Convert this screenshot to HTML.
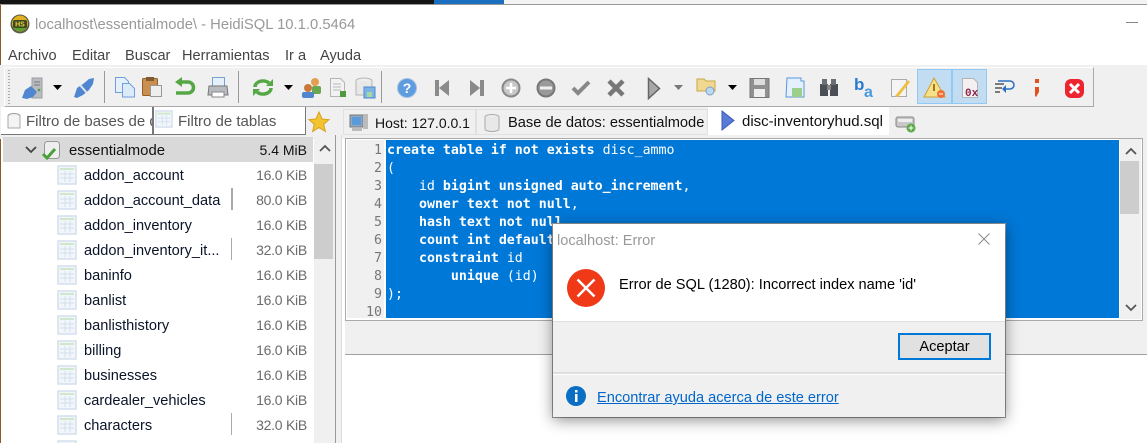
<!DOCTYPE html>
<html><head><meta charset="utf-8"><style>
html,body{margin:0;padding:0;width:1147px;height:443px;overflow:hidden;background:#fff}
body{position:relative;font-family:"Liberation Sans",sans-serif;font-size:14.6px;color:#000}
.a{position:absolute}
.t{position:absolute;white-space:nowrap;line-height:20px;margin-top:1px}
svg{position:absolute;overflow:visible}
.r{position:absolute;left:84px;white-space:nowrap;line-height:20px;color:#0a1428;font-size:14.6px;margin-top:1px}
.s{position:absolute;right:840px;white-space:nowrap;line-height:20px;color:#6b6b6b;font-size:14px;letter-spacing:-.25px}
.b{position:absolute;left:231px;width:1px;height:22px;background:#aaa}
.c{position:absolute;left:387px;white-space:pre;font:13.28px/18px "DejaVu Sans Mono","Liberation Mono",monospace;color:#fff}
.c b{font-weight:bold}
.n{position:absolute;left:346px;width:36px;text-align:right;font:13.28px/18px "DejaVu Sans Mono","Liberation Mono",monospace;color:#777}
.m{position:absolute;white-space:nowrap;line-height:20px;color:#666;margin-top:1px}
</style></head><body>

<svg width="0" height="0" style="position:absolute"><defs>
<symbol id="tb" viewBox="0 0 20 20"><rect x="1" y="1" width="18" height="18" fill="#f2f6fb" stroke="#d3dfee" stroke-width="1.500"/><rect x="3" y="3" width="14" height="2" fill="#cfe8cc"/><path d="M3 9h14M3 13h14M8 6v11M13 6v11" stroke="#d3dfee" fill="none"/></symbol>
</defs></svg>

<!-- top strip -->
<div class="a" style="left:0;top:0;width:434px;height:4px;background:#141414"></div>
<div class="a" style="left:434px;top:0;width:70px;height:4px;background:#1a6fc0"></div>
<div class="a" style="left:504px;top:0;width:643px;height:4px;background:#f3f3f3"></div>
<div class="a" style="left:0;top:4px;width:1147px;height:1px;background:#999"></div>
<div class="a" style="left:0;top:5px;width:1px;height:438px;background:#8a5a2a"></div>

<!-- title -->
<svg style="left:10px;top:14px" width="20" height="20"><circle cx="10" cy="10" r="9.500" fill="#5a5a4a"/><circle cx="10" cy="9.500" r="8" fill="#e0b020"/><path d="M2.500 12a8 8 0 0 0 15 0z" fill="#5aa02c"/><rect x="3" y="6" width="14" height="8" rx="2" fill="#3a4a20"/><text x="10" y="12.500" font-size="7" font-weight="bold" text-anchor="middle" fill="#f0d040" font-family="Liberation Sans">HS</text></svg>
<div class="t" style="left:35px;top:14px;color:#999;font-size:14.8px">localhost\essentialmode\ - HeidiSQL 10.1.0.5464</div>
<div class="a" style="left:1126px;top:22px;width:12px;height:1px;background:#888"></div>

<!-- menu -->
<div class="t" style="left:8px;top:45px;color:#444">Archivo</div>
<div class="t" style="left:72px;top:45px;color:#444">Editar</div>
<div class="t" style="left:125px;top:45px;color:#444">Buscar</div>
<div class="t" style="left:182px;top:45px;color:#444">Herramientas</div>
<div class="t" style="left:285px;top:45px;color:#444">Ir a</div>
<div class="t" style="left:320px;top:45px;color:#444">Ayuda</div>

<!-- band -->
<div class="a" style="left:0;top:65px;width:1147px;height:74px;background:#f0f0f0"></div>

<!-- toolbar -->
<div class="a" style="left:4px;top:67px;width:1088px;height:38px;background:#f0f0f0;border:1px solid #fff;border-right:1px solid #aaa;border-bottom:1px solid #aaa"></div>
<div class="a" style="left:8px;top:70px;width:2px;height:34px;background:repeating-linear-gradient(#aaa 0 1px,transparent 1px 3px)"></div>
<div class="a" style="left:104px;top:71px;width:1px;height:32px;background:#999"></div>
<div class="a" style="left:238px;top:71px;width:1px;height:32px;background:#999"></div>
<div class="a" style="left:381px;top:71px;width:1px;height:32px;background:#999"></div>
<div class="a" style="left:917px;top:69px;width:33px;height:33px;background:#c2dcf2;border:1px solid #90c8f6"></div>
<div class="a" style="left:952px;top:69px;width:33px;height:33px;background:#c2dcf2;border:1px solid #90c8f6"></div>

<svg class="i" style="left:0;top:0" width="1147" height="135">
<!-- connection -->
<rect x="32" y="78" width="10" height="20" fill="#b8bcc0" stroke="#9a9ea2"/><path d="M34 82h6M34 85h6" stroke="#777"/><circle cx="39" cy="90" r="1.300" fill="#4aa03a"/>
<path d="M22 98l3-8 6-4 6 6-4 5-6 2z" fill="#4f86cf"/>
<path d="M53 85h9l-4.500 5z" fill="#000"/>
<path d="M74 97l3-9 6-4 6-5 5-1-1 6-4 6-6 5-6 3z" fill="#4f86cf"/><path d="M80 85l7 8" stroke="#dfe6ee" stroke-width="2"/>
<!-- copy -->
<path d="M115.500 77.500h9l4 4v11h-13z" fill="#e6f0fb" stroke="#6f9fdc"/><path d="M122.500 83.500h7l5 5v8.500h-12z" fill="#dcebfa" stroke="#6f9fdc"/>
<!-- paste -->
<rect x="142.500" y="78.500" width="15" height="17" rx="1" fill="#c98f4f" stroke="#96602c"/><rect x="146" y="77" width="8" height="4" fill="#7f5a30"/><rect x="150.500" y="85.500" width="11" height="11" fill="#eee" stroke="#999"/>
<!-- undo -->
<path d="M179 82h9a5 5 0 0 1 0 11h-12" fill="none" stroke="#55a745" stroke-width="3.500"/><path d="M182 77l-7 5 7 5z" fill="#55a745"/>
<!-- print -->
<rect x="212.500" y="77.500" width="12" height="9" fill="#e6f0fb" stroke="#7aa0d0"/><path d="M209 86h18l1 9h-20z" fill="#b8bcc0" stroke="#777"/><rect x="212" y="92" width="12" height="5" fill="#fff" stroke="#888"/>
<!-- refresh -->
<path d="M255 87a8 6 0 0 1 14-4" fill="none" stroke="#55a745" stroke-width="3.500"/><path d="M271 88a8 6 0 0 1-14 4" fill="none" stroke="#55a745" stroke-width="3.500"/><path d="M273 79v7h-7zM253 96v-7h7z" fill="#55a745"/>
<path d="M284 85h9l-4.500 5z" fill="#000"/>
<!-- users -->
<circle cx="315" cy="82" r="4" fill="#e0a050"/><rect x="312" y="86" width="9" height="8" rx="2" fill="#6aa84f"/><circle cx="308" cy="88" r="4" fill="#c87838"/><rect x="302" y="92" width="12" height="6" rx="2" fill="#4f86cf"/>
<!-- doc -->
<path d="M330.500 78.500h10l4 4v14h-14z" fill="#f2f2f2" stroke="#b5b5b5"/><path d="M333 84h8M333 87h8M333 90h8" stroke="#bbb"/><rect x="340" y="91" width="6" height="6" fill="#4f9a3f"/>
<!-- db save -->
<ellipse cx="364" cy="81" rx="8" ry="3" fill="#eee" stroke="#b5b5b5"/><path d="M356 81v14h16v-14" fill="#e8e8e8" stroke="#b5b5b5"/><rect x="364" y="87" width="11" height="11" fill="#7db4e8" stroke="#5088c8"/><rect x="367" y="92" width="5" height="5" fill="#a8d8a0"/>
<!-- help -->
<circle cx="407" cy="88" r="9.500" fill="#5e9ce0" stroke="#a9c4e4"/><text x="407" y="93" font-size="14" font-weight="bold" fill="#fff" text-anchor="middle" font-family="Liberation Sans">?</text>
<!-- nav -->
<path d="M435 80h4v16h-4zM449 80v16l-10-8z" fill="#8a8a8a"/>
<path d="M484 80h-4v16h4zM470 80v16l10-8z" fill="#8a8a8a"/>
<circle cx="511" cy="88" r="8.500" fill="#c8c8c8" stroke="#888" stroke-width="2"/><path d="M506 88h10M511 83v10" stroke="#fff" stroke-width="2.500"/>
<circle cx="546" cy="88" r="8.500" fill="#999" stroke="#777" stroke-width="2"/><path d="M540 88h12" stroke="#eee" stroke-width="3"/>
<path d="M573 88l5 5 11-11" fill="none" stroke="#888" stroke-width="4"/>
<path d="M609 81l14 14M623 81l-14 14" stroke="#777" stroke-width="4.500"/>
<path d="M648.500 78.500l11 10-11 10z" fill="#a8a8a8" stroke="#666" stroke-width="1.500"/>
<path d="M674 85h9l-4.500 5z" fill="#777"/>
<path d="M697 79h7l2 2h9v10h-18z" fill="#f0d890" stroke="#c8a848"/><circle cx="710" cy="91" r="4" fill="#bcd8f0" stroke="#7aa0c8"/>
<path d="M728 85h9l-4.500 5z" fill="#000"/>
<!-- save grey -->
<rect x="750" y="78.500" width="19" height="19" fill="#909090" stroke="#777"/><rect x="754" y="79" width="11" height="6" fill="#ddd"/><rect x="754" y="89" width="11" height="8" fill="#eee"/>
<!-- sql save -->
<path d="M787 78h14v3h3v16h-18z" fill="#e4f0fb" stroke="#5a96dc"/><rect x="792" y="88" width="10" height="9" fill="#9ccf8c"/>
<!-- binoculars -->
<rect x="820" y="84" width="8" height="12" fill="#4a4f55"/><rect x="830" y="84" width="8" height="12" fill="#4a4f55"/><rect x="822" y="79" width="5" height="6" fill="#6a6f75"/><rect x="831" y="79" width="5" height="6" fill="#6a6f75"/><rect x="827" y="85" width="4" height="5" fill="#888"/>
<!-- replace -->
<text x="854" y="90" font-size="17" font-weight="bold" fill="#2a7ad0" font-family="Liberation Sans">b</text><text x="864" y="97" font-size="16" font-weight="bold" fill="#4a9ae0" font-family="Liberation Sans">a</text>
<!-- edit -->
<path d="M891.500 79.500h15v17h-15z" fill="#f4f4f4" stroke="#aaa"/><path d="M895 96l13-16 2 2-12 15z" fill="#eec040"/>
<!-- warning -->
<path d="M934 78l11 19h-21z" fill="#f6e08a" stroke="#d0a030"/><rect x="933" y="84" width="2" height="7" fill="#a07818"/><circle cx="941" cy="94" r="4" fill="#ef7030"/><path d="M939 94h4" stroke="#fff"/>
<!-- 0x -->
<path d="M962.500 78.500h11l4 4v15h-15z" fill="#f4f0f2" stroke="#b5b5b5"/><text x="965" y="96" font-size="11" font-weight="bold" fill="#8a2850" font-family="Liberation Mono">0x</text>
<!-- wrap -->
<path d="M995 84h9M995 88h7M995 92h5" stroke="#555" stroke-width="1.500"/><path d="M998 81h12a3 3 0 0 1 0 8h-6" fill="none" stroke="#2a70c0" stroke-width="1.500"/><path d="M1006 85l-4 4 4 4z" fill="#2a70c0"/>
<!-- semicolon -->
<rect x="1035" y="79" width="4" height="4" fill="#e05020"/><path d="M1035 87h4v5l-3 5-1-1z" fill="#e05020"/>
<!-- stop -->
<rect x="1065" y="79" width="19" height="19" rx="6" fill="#ee2530"/><path d="M1070 84l9 9M1079 84l-9 9" stroke="#fff" stroke-width="3"/>
</svg>

<!-- filters row -->
<div class="a" style="left:1px;top:107px;width:151px;height:27px;background:#fff;border-right:1px solid #777;border-bottom:1px solid #777;overflow:hidden">
<div class="t" style="left:25px;top:4px;color:#555;font-size:15px">Filtro de bases de datos</div></div>
<div class="a" style="left:153px;top:107px;width:151px;height:27px;background:#fff;border:solid #777;border-width:0 1px 1px 1px"></div>
<svg style="left:5px;top:112px" width="16" height="18"><ellipse cx="9" cy="4" rx="6" ry="2.500" fill="#f0f0f0" stroke="#999"/><path d="M3 4v12h12V4" fill="#f4f4f4" stroke="#aaa"/></svg>
<svg style="left:155px;top:110px" width="18" height="20"><use href="#tb" width="18" height="18"/></svg>
<div class="t" style="left:178px;top:111px;color:#555;font-size:15px">Filtro de tablas</div>
<svg style="left:308px;top:111px" width="22" height="22"><path d="M11 1l3 7 7 .6-5.300 4.600 1.700 7.300L11 16.500 4.600 20.500l1.700-7.300L1 8.600 8 8z" fill="#f4c430" stroke="#d8a020"/></svg>

<!-- tabs -->
<div class="a" style="left:343px;top:109px;width:133px;height:26px;background:#f0f0f0;border:1px solid #e0e0e0;box-sizing:border-box"></div>
<div class="a" style="left:476px;top:109px;width:232px;height:26px;background:#f0f0f0;border:1px solid #e0e0e0;box-sizing:border-box"></div>
<div class="a" style="left:708px;top:107px;width:181px;height:28px;background:#fff"></div>
<svg style="left:349px;top:113px" width="20" height="20"><rect x="1" y="2" width="13" height="12" fill="#8fa9c4" stroke="#777"/><rect x="3" y="4" width="9" height="8" fill="#5a9ad8"/><rect x="14" y="1" width="5" height="15" fill="#bbb"/><rect x="3" y="15" width="10" height="3" fill="#bbb"/></svg>
<div class="t" style="left:375px;top:112px;color:#111;font-size:14px">Host: 127.0.0.1</div>
<svg style="left:483px;top:113px" width="18" height="20"><ellipse cx="9" cy="4" rx="7" ry="2.500" fill="#eee" stroke="#aaa"/><path d="M2 4v12a7 2.500 0 0 0 14 0V4" fill="#e8e8e8" stroke="#aaa"/></svg>
<div class="t" style="left:508px;top:112px;color:#111;font-size:14.67px">Base de datos: essentialmode</div>
<svg style="left:720px;top:110px" width="16" height="22"><path d="M2 1l12 9.500L2 20z" fill="#5a7ad8" stroke="#3a5ab8"/></svg>
<div class="t" style="left:742px;top:111px;color:#111;font-size:15px">disc-inventoryhud.sql</div>
<svg style="left:895px;top:115px" width="22" height="18"><rect x="1" y="2" width="18" height="10" rx="2" fill="#c8c8c8" stroke="#888"/><rect x="3" y="4" width="14" height="3" fill="#eee"/><circle cx="16" cy="13" r="4.500" fill="#5aa84a"/><path d="M13.500 13h5M16 10.500v5" stroke="#fff"/></svg>

<!-- tree -->
<div class="a" style="left:3px;top:137px;width:310px;height:25px;background:#fff"></div>
<div class="a" style="left:3px;top:137px;width:310px;height:25px;background:#d9d9d9"></div>
<svg style="left:25px;top:146px" width="12" height="8"><path d="M1 1l5 5 5-5" fill="none" stroke="#444" stroke-width="1.800"/></svg>
<svg style="left:41px;top:139px" width="21" height="22"><rect x="3.500" y="2.500" width="15" height="17" rx="3" fill="#eee" stroke="#999"/><path d="M2 15l4 4 8-9" fill="none" stroke="#4aa03a" stroke-width="3"/></svg>
<div class="t" style="left:69px;top:140px;color:#111;font-size:14.9px">essentialmode</div>
<div class="t" style="right:840px;top:139px;color:#111;font-size:14px">5.4 MiB</div>

<div class="a" style="left:314px;top:137px;width:21px;height:306px;background:#f0f0f0"></div>
<svg style="left:319px;top:145px" width="12" height="8"><path d="M1 6l5-5 5 5" fill="none" stroke="#555" stroke-width="1.800"/></svg>
<div class="a" style="left:314px;top:164px;width:19px;height:95px;background:#cdcdcd"></div>
<div class="a" style="left:335px;top:135px;width:1px;height:308px;background:#999"></div>
<div class="a" style="left:336px;top:135px;width:5px;height:308px;background:#f0f0f0"></div>
<div class="a" style="left:341px;top:135px;width:1px;height:308px;background:#ddd"></div>

<svg style="left:57px;top:165px" width="20" height="278">
<use href="#tb" y="0" width="20" height="20"/><use href="#tb" y="25" width="20" height="20"/><use href="#tb" y="50" width="20" height="20"/><use href="#tb" y="75" width="20" height="20"/><use href="#tb" y="100" width="20" height="20"/><use href="#tb" y="125" width="20" height="20"/><use href="#tb" y="150" width="20" height="20"/><use href="#tb" y="175" width="20" height="20"/><use href="#tb" y="200" width="20" height="20"/><use href="#tb" y="225" width="20" height="20"/><use href="#tb" y="250" width="20" height="20"/><use href="#tb" y="275" width="20" height="20"/>
</svg>
<div class="r" style="top:165px">addon_account</div><div class="s" style="top:165px">16.0 KiB</div>
<div class="r" style="top:190px">addon_account_data</div><div class="s" style="top:190px">80.0 KiB</div><div class="b" style="top:188px;width:2px"></div>
<div class="r" style="top:215px">addon_inventory</div><div class="s" style="top:215px">16.0 KiB</div>
<div class="r" style="top:240px">addon_inventory_it...</div><div class="s" style="top:240px">32.0 KiB</div><div class="b" style="top:238px"></div>
<div class="r" style="top:265px">baninfo</div><div class="s" style="top:265px">16.0 KiB</div>
<div class="r" style="top:290px">banlist</div><div class="s" style="top:290px">16.0 KiB</div>
<div class="r" style="top:315px">banlisthistory</div><div class="s" style="top:315px">16.0 KiB</div>
<div class="r" style="top:340px">billing</div><div class="s" style="top:340px">16.0 KiB</div>
<div class="r" style="top:365px">businesses</div><div class="s" style="top:365px">16.0 KiB</div>
<div class="r" style="top:390px">cardealer_vehicles</div><div class="s" style="top:390px">16.0 KiB</div>
<div class="r" style="top:415px">characters</div><div class="s" style="top:415px">32.0 KiB</div><div class="b" style="top:413px"></div>

<!-- editor -->
<div class="a" style="left:345px;top:135px;width:802px;height:220px;background:#f0f0f0"></div>
<div class="a" style="left:345px;top:354px;width:802px;height:1px;background:#a0a0a0"></div>
<div class="a" style="left:345px;top:138px;width:796px;height:181px;background:#fff;border:1px solid #aaa"></div>
<div class="a" style="left:347px;top:140px;width:37px;height:178px;background:#f0f0f0"></div>
<div class="a" style="left:386px;top:140px;width:733px;height:178px;background:#0078d7"></div>
<div class="a" style="left:1120px;top:139px;width:21px;height:180px;background:#f0f0f0"></div>
<svg style="left:1125px;top:148px" width="12" height="8"><path d="M1 6l5-5 5 5" fill="none" stroke="#555" stroke-width="1.800"/></svg>
<svg style="left:1125px;top:304px" width="12" height="8"><path d="M1 1l5 5 5-5" fill="none" stroke="#555" stroke-width="1.800"/></svg>
<div class="a" style="left:1120px;top:161px;width:19px;height:53px;background:#cdcdcd"></div>

<div class="n" style="top:142px">1</div><div class="n" style="top:160px">2</div><div class="n" style="top:178px">3</div><div class="n" style="top:196px">4</div><div class="n" style="top:214px">5</div><div class="n" style="top:232px">6</div><div class="n" style="top:250px">7</div><div class="n" style="top:268px">8</div><div class="n" style="top:286px">9</div><div class="n" style="top:304px">10</div>
<div class="c" style="top:142px"><b>create table if not exists</b> disc_ammo</div>
<div class="c" style="top:160px">(</div>
<div class="c" style="top:178px">    id <b>bigint unsigned auto_increment</b>,</div>
<div class="c" style="top:196px">    <b>owner text not null</b>,</div>
<div class="c" style="top:214px">    <b>hash text not null</b>,</div>
<div class="c" style="top:232px">    <b>count int default</b> 0,</div>
<div class="c" style="top:250px">    <b>constraint</b> id</div>
<div class="c" style="top:268px">        <b>unique</b> (id)</div>
<div class="c" style="top:286px">);</div>

<!-- dialog -->
<div class="a" style="left:553px;top:224px;width:452px;height:193px;background:#fff;box-shadow:0 3px 14px rgba(0,0,0,.45),0 0 0 1px #9a9a9a">
<div class="a" style="left:0;top:97px;width:452px;height:96px;background:#f0f0f0;border-top:1px solid #dfdfdf;box-sizing:border-box"></div>
<div class="a" style="left:0;top:148px;width:452px;height:2px;background:#dfdfdf"></div>
<div class="a" style="left:0;top:150px;width:452px;height:1px;background:#fff"></div>
</div>
<div class="m" style="left:557px;top:230px;color:#999">localhost: Error</div>
<svg style="left:978px;top:233px" width="12" height="12"><path d="M.5.5l11 11M11.500.5l-11 11" stroke="#8a8a8a"/></svg>
<svg style="left:567px;top:269px" width="38" height="38"><circle cx="19" cy="19" r="19" fill="#f03a17"/><path d="M10.500 10.500l17 17M27.500 10.500l-17 17" stroke="#fff" stroke-width="2.500"/></svg>
<div class="t" style="left:619px;top:274px;color:#000">Error de SQL (1280): Incorrect index name 'id'</div>
<div class="a" style="left:898px;top:333px;width:89px;height:23px;background:#e1e1e1;border:2px solid #0078d7"></div>
<div class="t" style="left:898px;top:336px;width:93px;text-align:center;color:#000">Aceptar</div>
<svg style="left:566px;top:386px" width="20" height="20"><circle cx="10" cy="10" r="10" fill="#0a6fc4"/><rect x="9" y="8" width="2.500" height="8" fill="#fff"/><rect x="9" y="4" width="2.500" height="2.500" fill="#fff"/></svg>
<div class="t" style="left:597px;top:387px;color:#0066cc;text-decoration:underline">Encontrar ayuda acerca de este error</div>
</body></html>
